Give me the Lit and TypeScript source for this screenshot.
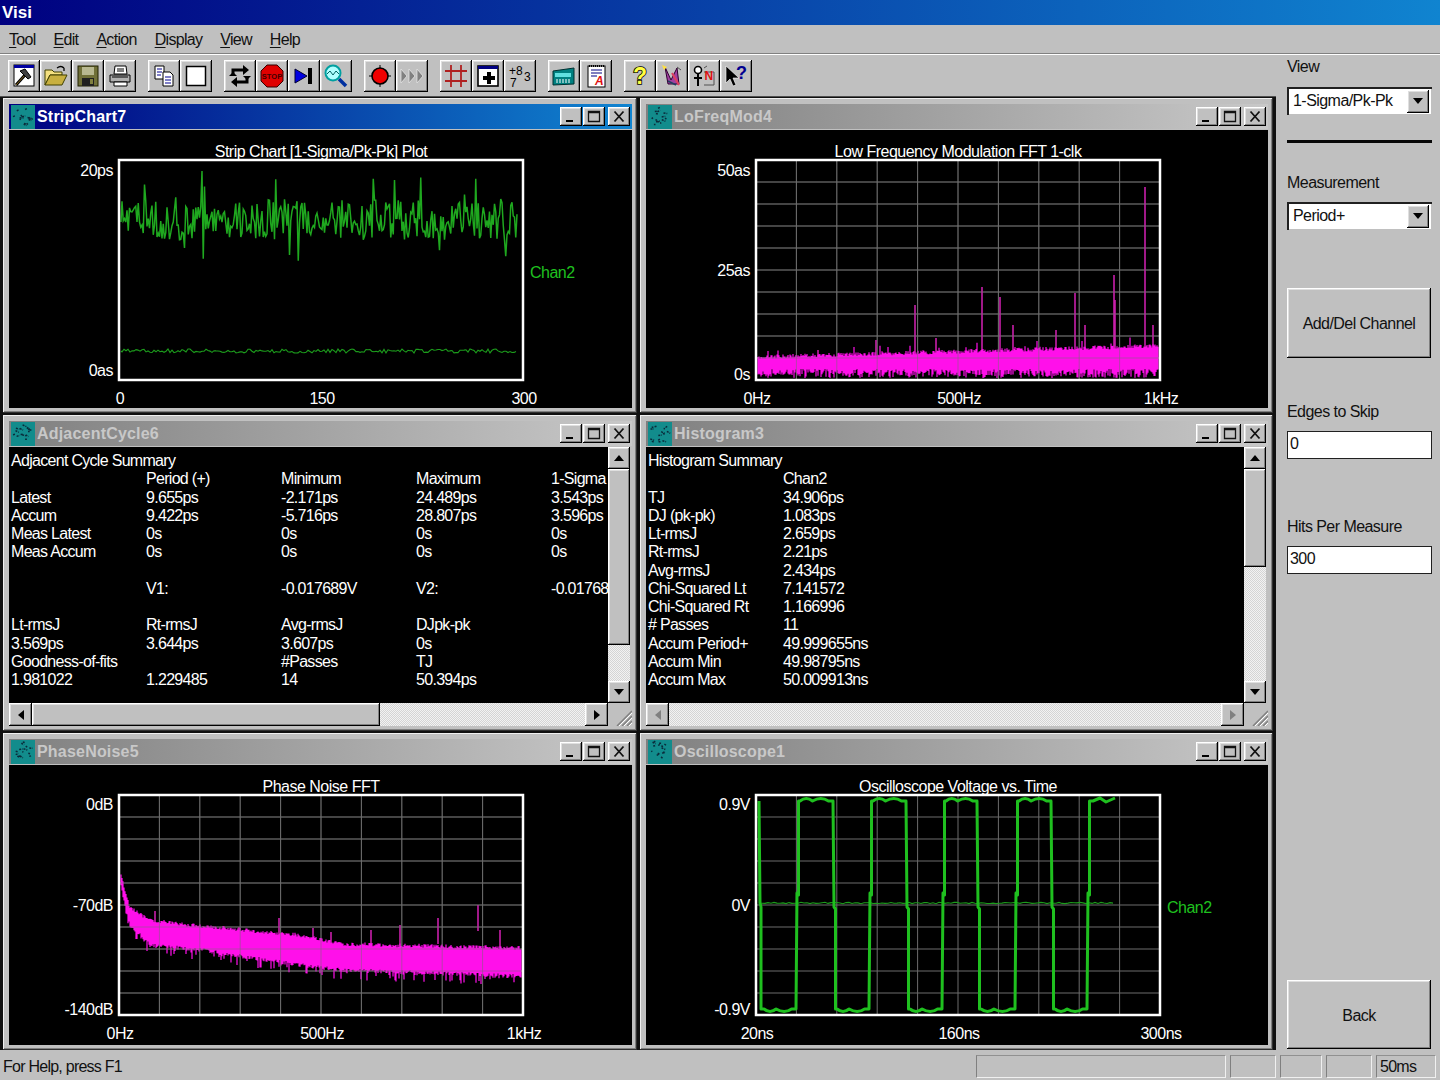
import { LitElement, css, html, svg, nothing } from 'lit';
import { customElement } from 'lit/decorators.js';

// small seeded generator so the traces come out the same on every load
function rng(seed: number) {
  return () => {
    seed = (seed + 0x6d2b79f5) | 0;
    let t = Math.imul(seed ^ (seed >>> 15), 1 | seed);
    t = (t + Math.imul(t ^ (t >>> 7), 61 | t)) ^ t;
    return ((t ^ (t >>> 14)) >>> 0) / 4294967296;
  };
}

// linear interpolation through [x, y] knots
function lerp(knots: [number, number][], x: number) {
  for (let i = 1; i < knots.length; i++) {
    const [x0, y0] = knots[i - 1];
    const [x1, y1] = knots[i];
    if (x <= x1) return y0 + ((y1 - y0) * (x - x0)) / (x1 - x0);
  }
  return knots[knots.length - 1][1];
}

function stripTrace() {
  const r = rng(7);
  let d = 'M2 62';
  for (let x = 3; x < 399; x += 1.25) {
    const big = r() < 0.14 ? (r() - 0.6) * 70 : 0;
    const y = 60 + (r() - 0.5) * 40 + big;
    d += `L${x} ${y.toFixed(1)}`;
  }
  return d;
}

function flatTrace() {
  const r = rng(3);
  let d = 'M2 191';
  for (let x = 3; x < 399; x += 2) d += `L${x} ${(191 + (r() - 0.5) * 4).toFixed(1)}`;
  return d;
}

function lofreqBand() {
  const r = rng(11);
  let d = '';
  for (let x = 2; x < 403; x += 1) {
    const top = 199 - (x / 400) * 11 - r() * 4 - (r() < 0.08 ? r() * 9 : 0);
    const bottom = 209 + r() * 9;
    d += `M${x} ${top.toFixed(1)}V${bottom.toFixed(1)}`;
  }
  return d;
}

const lofreqSpikes: [number, number][] = [
  [159, 145], [226, 127], [244, 137], [257, 165], [319, 133], [329, 165], [358, 115],
  [359, 140], [389, 27], [397, 165], [62, 190], [120, 180], [180, 178], [300, 170],
];

const phaseTop: [number, number][] = [[2, 80], [8, 105], [11, 115], [31, 127], [81, 133], [181, 142], [221, 151], [403, 155]];
const phaseBottom: [number, number][] = [[2, 90], [11, 128], [31, 148], [81, 153], [181, 168], [221, 173], [403, 179]];

function phaseBand() {
  const r = rng(23);
  let d = '';
  for (let x = 2; x < 403; x += 1) {
    const top = lerp(phaseTop, x) - r() * 4;
    const bottom = lerp(phaseBottom, x) + r() * 4 + (r() < 0.2 ? r() * 10 : 0);
    d += `M${x} ${top.toFixed(1)}V${bottom.toFixed(1)}`;
  }
  return d;
}

const phaseSpikes: [number, number][] = [
  [160, 123], [194, 133], [36, 116], [281, 130], [319, 123], [359, 110], [381, 135],
  [252, 135], [212, 137], [120, 132],
];

function scopeTrace() {
  const edges = [41, 78, 114, 151, 187, 222, 260, 296, 332];
  const high = 6;
  const low = 214;
  let d = `M3 ${high}L4 108L5 112L5 ${low}`;
  let level = false;
  let prev = 5;
  for (const e of edges) {
    const base = level ? high : low;
    const ripple = level ? -2.5 : 2.5;
    const w = e - prev;
    d += `L${prev + 3} ${base}Q${prev + w * 0.25} ${base + ripple * 2} ${prev + w * 0.42} ${base}`;
    d += `Q${prev + w * 0.65} ${base + ripple * 2} ${prev + w * 0.85} ${base}L${e - 1} ${base}`;
    const next = level ? low : high;
    const mid = level ? 112 : 98;
    d += `L${e} ${mid}L${e + 1.5} ${mid + 2}L${e + 1.5} ${next}`;
    level = !level;
    prev = e;
  }
  d += `L${prev + 5} ${high}L${prev + 12} ${high - 3}L${prev + 18} ${high + 1}L${prev + 27} ${high - 3}`;
  return d;
}

function scopeZero() {
  const r = rng(5);
  let d = 'M3 108';
  for (let x = 6; x < 360; x += 3) d += `L${x} ${(108 + (r() - 0.5) * 1.4).toFixed(1)}`;
  return d;
}

function grid() {
  let d = '';
  for (let i = 1; i < 10; i++) {
    d += `M${(i * 40.4).toFixed(1)} 0V220M0 ${i * 22}H404`;
  }
  return d;
}

interface Chart {
  title: string;
  yl: [string, number][];
  xl: string[];
  chan?: boolean;
  gridded?: boolean;
  trace: unknown;
}

const spikePath = (s: [number, number][], len: number) => s.map(([x, y]) => `M${x} ${y}v${len}`).join('');

const charts: Record<string, Chart> = {
  strip: {
    title: 'Strip Chart [1-Sigma/Pk-Pk] Plot',
    yl: [['20ps', 40], ['0as', 240]],
    xl: ['0', '150', '300'],
    chan: true,
    trace: svg`<path class="green" d=${stripTrace()} /><path class="green dim" d=${flatTrace()} />`,
  },
  lofreq: {
    title: 'Low Frequency Modulation FFT 1-clk',
    yl: [['50as', 40], ['25as', 140], ['0s', 244]],
    xl: ['0Hz', '500Hz', '1kHz'],
    gridded: true,
    trace: svg`<path class="spike" d=${lofreqSpikes.map(([x, y]) => `M${x} ${y}V205`).join('')} /><path class="band" d=${lofreqBand()} />`,
  },
  phase: {
    title: 'Phase Noise FFT',
    yl: [['0dB', 39], ['-70dB', 140], ['-140dB', 244]],
    xl: ['0Hz', '500Hz', '1kHz'],
    gridded: true,
    trace: svg`<path class="spike" d=${spikePath(phaseSpikes, 26)} /><path class="band" d=${phaseBand()} />`,
  },
  scope: {
    title: 'Oscilloscope Voltage vs. Time',
    yl: [['0.9V', 39], ['0V', 140], ['-0.9V', 244]],
    xl: ['20ns', '160ns', '300ns'],
    chan: true,
    gridded: true,
    trace: svg`<path class="green dim" d=${scopeZero()} /><path class="wave" d=${scopeTrace()} />`,
  },
};

const adjacentRows = [
  ['Adjacent Cycle Summary'],
  ['', 'Period (+)', 'Minimum', 'Maximum', '1-Sigma'],
  ['Latest', '9.655ps', '-2.171ps', '24.489ps', '3.543ps'],
  ['Accum', '9.422ps', '-5.716ps', '28.807ps', '3.596ps'],
  ['Meas Latest', '0s', '0s', '0s', '0s'],
  ['Meas Accum', '0s', '0s', '0s', '0s'],
  [''],
  ['', 'V1:', '-0.017689V', 'V2:', '-0.017689V'],
  [''],
  ['Lt-rmsJ', 'Rt-rmsJ', 'Avg-rmsJ', 'DJpk-pk'],
  ['3.569ps', '3.644ps', '3.607ps', '0s'],
  ['Goodness-of-fits', '', '#Passes', 'TJ'],
  ['1.981022', '1.229485', '14', '50.394ps'],
];

const histogramRows = [
  ['Histogram Summary'],
  ['', 'Chan2'],
  ['TJ', '34.906ps'],
  ['DJ (pk-pk)', '1.083ps'],
  ['Lt-rmsJ', '2.659ps'],
  ['Rt-rmsJ', '2.21ps'],
  ['Avg-rmsJ', '2.434ps'],
  ['Chi-Squared Lt', '7.141572'],
  ['Chi-Squared Rt', '1.166996'],
  ['# Passes', '11'],
  ['Accum Period+', '49.999655ns'],
  ['Accum Min', '49.98795ns'],
  ['Accum Max', '50.009913ns'],
];

const toolGroups = [
  ['tool', 'open', 'save', 'print'],
  ['copy', 'blank'],
  ['loop', 'stop', 'step', 'zoom'],
  ['record', 'forward'],
  ['hash', 'plus', 'digits'],
  ['calc', 'note'],
  ['help', 'wizard', 'figure', 'whatsthis'],
];

const icons: Record<string, unknown> = {
  tool: svg`<rect x="2" y="1" width="20" height="21" fill="#fff" stroke="#000"/><rect x="2" y="1" width="20" height="3" fill="#0000a0"/>
    <path d="M4 21L13 11" stroke="#000" stroke-width="3"/><path d="M4 21L13 11" stroke="#8a6a20" stroke-width="1"/><path d="M8 7l5-2 6 8-3 2z" fill="#404040" stroke="#000"/>`,
  open: svg`<path d="M1 6h7l2 2h8v3H6L1 21z" fill="#f4e080" stroke="#404000"/><path d="M1 21l5-10h17l-5 10z" fill="#c8b040" stroke="#404000"/>
    <path d="M13 4q4-3 7 0M20 4l-2-1M20 4l0 3" fill="none" stroke="#000" stroke-width="1.3"/>`,
  save: svg`<rect x="2" y="2" width="20" height="20" fill="#707038" stroke="#202000"/><rect x="6" y="3" width="12" height="8" fill="#b8b890"/><rect x="6" y="14" width="12" height="8" fill="#202020"/><rect x="14" y="15" width="3" height="5" fill="#808040"/>`,
  print: svg`<path d="M7 2h11l1 8H6z" fill="#fff" stroke="#000"/><path d="M9 5h7M9 7h7" stroke="#000"/><path d="M2 11h20v7H2z" fill="#b0b0b0" stroke="#000"/><path d="M6 18h13v4H6z" fill="#fff" stroke="#000"/><path d="M4 13h16" stroke="#000"/>`,
  copy: svg`<path d="M3 2h9v13H3z" fill="#fff" stroke="#000"/><path d="M5 5h5M5 8h5M5 11h4" stroke="#000090"/><path d="M11 8h7l3 3v11H11z" fill="#fff" stroke="#000"/><path d="M13 13h6M13 16h6M13 19h6" stroke="#000090"/>`,
  blank: svg`<rect x="2.5" y="2.5" width="19" height="19" fill="#fff" stroke="#000" stroke-width="1.5"/>`,
  loop: svg`<g fill="none" stroke="#000" stroke-width="3"><path d="M5 12V6h12"/><path d="M19 12v6H7"/></g><path d="M15 1l6 5-6 5zM9 13l-6 5 6 5z" fill="#000"/><path d="M1 12l4-4 4 4zM15 12l4 4 4-4z" fill="#000"/>`,
  stop: svg`<path d="M7 1h10l6 6v10l-6 6H7l-6-6V7z" fill="#e00000" stroke="#300" stroke-width="1"/><text class="stopword" x="12" y="15">STOP</text>`,
  step: svg`<path d="M3 5l12 7-12 7z" fill="#0000e0" stroke="#000030"/><rect x="16" y="4" width="4" height="16" fill="#000"/>`,
  zoom: svg`<path d="M15 15l7 7" stroke="#0030a0" stroke-width="3.5"/><circle cx="9" cy="9" r="7.5" fill="#b0ffff" stroke="#00a0a0" stroke-width="2"/><path d="M3 10l3-3 3 4 3-4 3 3" fill="none" stroke="#006060"/>`,
  record: svg`<circle cx="12" cy="12" r="8" fill="#f00000" stroke="#000" stroke-width="1.6"/><path d="M12 1v3M12 20v3M1 12h3M20 12h3" stroke="#000"/>`,
  forward: svg`<path d="M1 5l6 7-6 7zM9 5l6 7-6 7zM17 5l6 7-6 7z" fill="#808080" stroke="#e4e4e4" stroke-width=".8"/>`,
  hash: svg`<path d="M7 1v22M17 1v22M1 7h22M1 17h22" stroke="#b02020" stroke-width="1.8"/>`,
  plus: svg`<rect x="2" y="2" width="20" height="20" fill="#fff" stroke="#000" stroke-width="1.6"/><rect x="2" y="2" width="20" height="3" fill="#000080"/><path d="M13 8v12M7 14h12" stroke="#000" stroke-width="4"/>`,
  digits: svg`<text class="tiny" x="1" y="11">+8</text><text class="tiny" x="2" y="23">7</text><text class="tiny" x="16" y="17">3</text>`,
  calc: svg`<path d="M1 7l21-3v16l-21 1z" fill="#008080" stroke="#003030"/><rect x="3" y="9" width="16" height="4" fill="#60e0e0"/><path d="M4 16h14M4 18h14" stroke="#fff" stroke-dasharray="2 1"/>`,
  note: svg`<rect x="4" y="2" width="17" height="21" fill="#fff" stroke="#000"/><path d="M5 2h15" stroke="#000" stroke-width="2" stroke-dasharray="1 1"/><path d="M7 6h11M7 9h11M7 12h6" stroke="#000080"/><text class="redA" x="11" y="21">A</text>`,
  help: svg`<text class="qmark" x="12" y="20">?</text>`,
  wizard: svg`<path d="M5 3l6 13 6-12 2 16H8z" fill="#a040a0" stroke="#300030"/><path d="M2 1l5 2-3 3z" fill="#ffe040"/><path d="M12 9l7 12" stroke="#e04060" stroke-width="2"/><path d="M8 17l8 4" stroke="#204060" stroke-width="1.5"/><path d="M17 3l4 3" stroke="#505050"/>`,
  figure: svg`<circle cx="6" cy="6" r="3.5" fill="#fff" stroke="#000" stroke-width="1.6"/><path d="M6 10v12M2 14h8" stroke="#000" stroke-width="2"/><path d="M12 4l3-2M12 8h10v13H12" fill="none" stroke="#505050"/><text class="redN" x="12.5" y="16">N</text>`,
  whatsthis: svg`<path d="M2 2v17l4-4 3 7 3-1-3-7h6z" fill="#000" stroke="#fff" stroke-width=".6"/><text class="blueQ" x="12" y="15">?</text>`,
};

@customElement('app-root')
export class AppRoot extends LitElement {
  static styles = css`
    :host {
      display: flex;
      flex-direction: column;
      width: 1440px;
      height: 1080px;
      overflow: hidden;
      background: #c0c0c0;
      font-family: 'Liberation Sans', Arial, sans-serif;
      font-size: 16px;
      letter-spacing: -0.55px;
      color: #111;
    }
    .appbar {
      height: 25px;
      flex: none;
      display: flex;
      align-items: center;
      padding-left: 2px;
      background: linear-gradient(90deg, #000080, #1084d0);
      color: #fff;
      font-size: 17px;
      font-weight: bold;
      letter-spacing: 0;
    }
    .menu {
      height: 29px;
      flex: none;
      display: flex;
      align-items: center;
      box-sizing: border-box;
      padding: 2px 0 0 9px;
      border-bottom: 1px solid #808080;
      box-shadow: 0 1px #fff;
      letter-spacing: -0.7px;
    }
    .menu span { margin-right: 18px; }
    .menu u { text-underline-offset: 2px; }
    .main { flex: 1; display: flex; min-height: 0; }
    .left { width: 1276px; flex: none; display: flex; flex-direction: column; }
    .toolbar {
      height: 42px;
      flex: none;
      display: flex;
      gap: 12px;
      padding: 6px 0 0 8px;
      box-sizing: border-box;
    }
    .group { display: flex; }
    .tbtn {
      width: 32px;
      height: 32px;
      display: flex;
      align-items: center;
      justify-content: center;
    }
    .raised {
      background: #c0c0c0;
      box-shadow: inset -1px -1px #000, inset 1px 1px #fff, inset -2px -2px #808080, inset 2px 2px #dfdfdf;
    }
    .tbtn svg { width: 24px; height: 24px; overflow: visible; }
    .workspace {
      flex: 1;
      display: grid;
      grid-template-columns: 634px 633px;
      grid-template-rows: 315px 316px 317px;
      gap: 2px 3px;
      padding: 2px 3px 0 3px;
      background: #101010;
      box-sizing: border-box;
      box-shadow: inset 0 1px #505050;
    }
    .win {
      display: flex;
      flex-direction: column;
      min-width: 0;
      min-height: 0;
      padding: 6px 5px 5px 6px;
      background: #c0c0c0;
      box-sizing: border-box;
      box-shadow: inset -1px -1px #303030, inset 1px 1px #f0f0f0, inset -2px -2px #808080;
    }
    .caption {
      height: 25px;
      flex: none;
      display: flex;
      align-items: center;
      margin-bottom: 1px;
      color: #c8c8c8;
      font-weight: bold;
      letter-spacing: 0.2px;
      background: linear-gradient(90deg, #808080, #c8c8c8);
    }
    .caption.active {
      color: #fff;
      background: linear-gradient(90deg, #000080, #1084d0);
    }
    .caption > svg { width: 24px; height: 24px; margin: 0 2px 0 2px; flex: none; }
    .caption .name { flex: 1; }
    .capbtn {
      width: 22px;
      height: 19px;
      margin-left: 1px;
      display: flex;
      align-items: center;
      justify-content: center;
    }
    .capbtn svg { width: 14px; height: 13px; }
    .capbtn.close { margin: 0 2px 0 3px; }
    .client { flex: 1; background: #000; min-height: 0; overflow: hidden; }
    .client > svg { display: block; width: 623px; height: 280px; }
    text { font-family: 'Liberation Sans', Arial, sans-serif; font-size: 16px; letter-spacing: -0.5px; fill: #fff; }
    .plotbox { fill: none; stroke: #fff; stroke-width: 2.5; }
    .gridline { fill: none; stroke: #6c6c6c; stroke-width: 1; }
    .gridover { fill: none; stroke: #707070; stroke-width: 1; opacity: 0.5; }
    .green { fill: none; stroke: #1fa81f; stroke-width: 1.5; }
    .dim { stroke: #1c9c1c; stroke-width: 1.1; }
    .wave { fill: none; stroke: #1fc01f; stroke-width: 3; stroke-linejoin: round; }
    .band { fill: none; stroke: #ff10ea; stroke-width: 1.2; }
    .spike { fill: none; stroke: #c81eaa; stroke-width: 1.6; }
    .chan { fill: #1fc01f; }
    .stopword { font-size: 7.5px; font-weight: bold; fill: #400000; text-anchor: middle; letter-spacing: 0; }
    .tiny { font-size: 12px; fill: #000; letter-spacing: 0; }
    .redA { font-size: 12px; font-weight: bold; font-style: italic; fill: #e01010; letter-spacing: 0; }
    .redN { font-size: 12px; font-weight: bold; fill: #e01010; letter-spacing: 0; }
    .qmark { font-size: 23px; font-weight: bold; text-anchor: middle; fill: #ffff40; stroke: #000; stroke-width: 1.6; paint-order: stroke; letter-spacing: 0; }
    .blueQ { font-size: 18px; font-weight: bold; fill: #000090; letter-spacing: 0; }
    .sheet { flex: 1; display: flex; flex-direction: column; min-height: 0; background: #c0c0c0; }
    .sheetbody { flex: 1; display: flex; min-height: 0; }
    .summary {
      flex: 1;
      min-width: 0;
      background: #000;
      color: #fff;
      overflow: hidden;
      white-space: nowrap;
      padding: 5px 0 0 2px;
      box-sizing: border-box;
      letter-spacing: -0.7px;
    }
    .row { display: grid; grid-template-columns: repeat(5, 135px); height: 18.25px; line-height: 18px; }
    .row.head { display: block; }
    .dither {
      background: repeating-conic-gradient(#d4d4d4 0 25%, #f2f2f2 0 50%) 0 0 / 2px 2px;
    }
    .vbar { width: 22px; margin-right: 2px; flex: none; display: flex; flex-direction: column; }
    .hbar { height: 23px; flex: none; display: flex; background: #c0c0c0; }
    .arrow { width: 22px; height: 22px; flex: none; display: flex; align-items: center; justify-content: center; }
    .arrow.h { width: 23px; height: 23px; }
    .arrow svg { width: 10px; height: 10px; }
    .trackfill { flex: 1; }
    .scrollrow { display: flex; }
    .thumb { flex: none; }
    .grip { width: 24px; flex: none; display: flex; align-items: flex-end; justify-content: flex-end; }
    .grip svg { width: 18px; height: 18px; }
    .panel {
      flex: 1;
      display: flex;
      flex-direction: column;
      padding: 0 8px 1px 11px;
    }
    .lbl { height: 20px; line-height: 20px; flex: none; }
    .combo {
      height: 28px;
      flex: none;
      display: flex;
      align-items: center;
      justify-content: space-between;
      padding-left: 6px;
      background: #fff;
      box-sizing: border-box;
      box-shadow: inset 2px 2px #202020, inset -1px -1px #c0c0c0;
    }
    .drop { width: 22px; height: 23px; margin-right: 3px; display: flex; align-items: center; justify-content: center; }
    .drop svg { width: 10px; height: 6px; }
    .rule { height: 3px; background: #080808; margin-top: 25px; flex: none; }
    .bigbtn {
      width: 144px;
      flex: none;
      display: flex;
      align-items: center;
      justify-content: center;
      padding-top: 2px;
      box-sizing: border-box;
    }
    .field {
      height: 28px;
      flex: none;
      padding-left: 3px;
      line-height: 26px;
      background: #fff;
      box-sizing: border-box;
      box-shadow: inset 1px 1px #202020, inset -1px -1px #202020;
    }
    .status {
      height: 26px;
      flex: none;
      display: flex;
      gap: 4px;
      margin: 2px 4px 2px 0;
      letter-spacing: -0.75px;
    }
    .status .help { flex: 1; padding-left: 3px; line-height: 30px; }
    .pane {
      flex: none;
      margin-top: 3px;
      height: 23px;
      box-sizing: border-box;
      line-height: 22px;
      padding-left: 3px;
      border-left: 1px solid #808080;
      border-top: 1px solid #909090;
      border-right: 1px solid #f0f0f0;
      border-bottom: 1px solid #f0f0f0;
    }
  `;

  private caption(name: string, active = false) {
    const r = rng(name.length * 31 + name.charCodeAt(0));
    let dash = '';
    for (let i = 0; i < 14; i++) {
      const x = 2 + r() * 17;
      const y = 2 + r() * 18;
      dash += `M${x.toFixed(1)} ${y.toFixed(1)}l${(1 + r() * 3).toFixed(1)} ${((r() - 0.5) * 4).toFixed(1)}`;
    }
    return html`<div class="caption ${active ? 'active' : ''}">
      <svg viewBox="0 0 24 24"><rect width="24" height="24" fill="#128c8c" /><path d=${dash} stroke="#0a2a3a" stroke-width="1.5" fill="none" stroke-dasharray="2 1" /></svg>
      <span class="name">${name}</span>
      <div class="capbtn raised"><svg viewBox="0 0 14 13"><path d="M2 10h7v2H2z" /></svg></div>
      <div class="capbtn raised"><svg viewBox="0 0 14 13"><path d="M1.5 1.5h11v10h-11z M1.5 2.5h11" fill="none" stroke="#111" stroke-width="1.3" /></svg></div>
      <div class="capbtn raised close"><svg viewBox="0 0 14 13"><path d="M2.5 1.5l9 10M11.5 1.5l-9 10" stroke="#111" stroke-width="1.8" /></svg></div>
    </div>`;
  }

  private chart(c: Chart) {
    const xs = [110, 312, 514];
    return html`<div class="client">
      <svg viewBox="0 0 623 280">
        <text x="312" y="27" text-anchor="middle">${c.title}</text>
        ${c.yl.map(([t, y]) => svg`<text x="104" y=${y + 5.5} text-anchor="end">${t}</text>`)}
        ${c.xl.map((t, i) => svg`<text x=${xs[i] + 1} y="274" text-anchor="middle">${t}</text>`)}
        ${c.chan ? svg`<text class="chan" x="521" y="148">Chan2</text>` : nothing}
        <g transform="translate(110 30)">
          ${c.gridded ? svg`<path class="gridline" d=${grid()} />` : nothing}
          ${c.trace}
          ${c.gridded && !c.chan ? svg`<path class="gridover" d=${grid()} />` : nothing}
          <rect class="plotbox" width="404" height="220" />
        </g>
      </svg>
    </div>`;
  }

  private arrow(dir: string, h = false, off = false) {
    const paths: Record<string, string> = {
      up: 'M0 8L5 2l5 6z',
      down: 'M0 2l5 6 5-6z',
      left: 'M8 0L2 5l6 5z',
      right: 'M2 0l6 5-6 5z',
    };
    return html`<div class="arrow ${h ? 'h' : ''} raised">
      <svg viewBox="0 0 10 10"><path d=${paths[dir]} fill=${off ? '#808080' : '#000'} /></svg>
    </div>`;
  }

  private sheet(rows: string[][], thumbH: number, thumbW: number, idle = false) {
    return html`<div class="sheet">
      <div class="sheetbody">
        <div class="summary">
          ${rows.map(
            (r) => html`<div class="row ${r.length === 1 ? 'head' : ''}">${r.map((v) => html`<span>${v}</span>`)}</div>`,
          )}
        </div>
        <div class="vbar dither">
          ${this.arrow('up')}
          <div class="thumb raised" style="height:${thumbH}px"></div>
          <div class="trackfill"></div>
          ${this.arrow('down')}
        </div>
      </div>
      <div class="hbar">
        <div class="dither trackfill scrollrow">
          ${this.arrow('left', true, idle)}
          ${thumbW ? html`<div class="thumb raised" style="width:${thumbW}px"></div>` : nothing}
          <div class="trackfill"></div>
          ${this.arrow('right', true, idle)}
        </div>
        <div class="grip">
          <svg viewBox="0 0 18 18"><path d="M3 18L18 3M8 18L18 8M13 18l5-5" stroke="#808080" stroke-width="1.5" /><path d="M5 18L18 5M10 18L18 10M15 18l3-3" stroke="#fff" /></svg>
        </div>
      </div>
    </div>`;
  }

  private combo(value: string, top: number) {
    return html`<div class="combo" style="margin-top:${top}px">
      <span>${value}</span>
      <div class="drop raised"><svg viewBox="0 0 10 6"><path d="M0 0h10L5 6z" /></svg></div>
    </div>`;
  }

  render() {
    return html`
      <div class="appbar">Visi</div>
      <div class="menu">
        <span><u>T</u>ool</span><span><u>E</u>dit</span><span><u>A</u>ction</span>
        <span><u>D</u>isplay</span><span><u>V</u>iew</span><span><u>H</u>elp</span>
      </div>
      <div class="main">
        <div class="left">
          <div class="toolbar">
            ${toolGroups.map(
              (g) => html`<div class="group">
                ${g.map((k) => html`<div class="tbtn raised"><svg viewBox="0 0 24 24">${icons[k]}</svg></div>`)}
              </div>`,
            )}
          </div>
          <div class="workspace">
            <div class="win">${this.caption('StripChart7', true)}${this.chart(charts.strip)}</div>
            <div class="win">${this.caption('LoFreqMod4')}${this.chart(charts.lofreq)}</div>
            <div class="win">${this.caption('AdjacentCycle6')}${this.sheet(adjacentRows, 176, 348)}</div>
            <div class="win">${this.caption('Histogram3')}${this.sheet(histogramRows, 98, 0, true)}</div>
            <div class="win">${this.caption('PhaseNoise5')}${this.chart(charts.phase)}</div>
            <div class="win">${this.caption('Oscilloscope1')}${this.chart(charts.scope)}</div>
          </div>
        </div>
        <div class="panel">
          <div class="lbl" style="margin-top:3px">View</div>
          ${this.combo('1-Sigma/Pk-Pk', 10)}
          <div class="rule"></div>
          <div class="lbl" style="margin-top:30px">Measurement</div>
          ${this.combo('Period+', 9)}
          <div class="bigbtn raised" style="height:70px;margin-top:58px">Add/Del Channel</div>
          <div class="lbl" style="margin-top:44px">Edges to Skip</div>
          <div class="field" style="margin-top:9px">0</div>
          <div class="lbl" style="margin-top:58px">Hits Per Measure</div>
          <div class="field" style="margin-top:9px">300</div>
          <div class="bigbtn raised" style="height:69px;margin-top:auto">Back</div>
        </div>
      </div>
      <div class="status">
        <div class="help">For Help, press F1</div>
        <div class="pane" style="width:250px"></div>
        <div class="pane" style="width:46px"></div>
        <div class="pane" style="width:42px"></div>
        <div class="pane" style="width:46px"></div>
        <div class="pane" style="width:60px">50ms</div>
      </div>
    `;
  }
}
